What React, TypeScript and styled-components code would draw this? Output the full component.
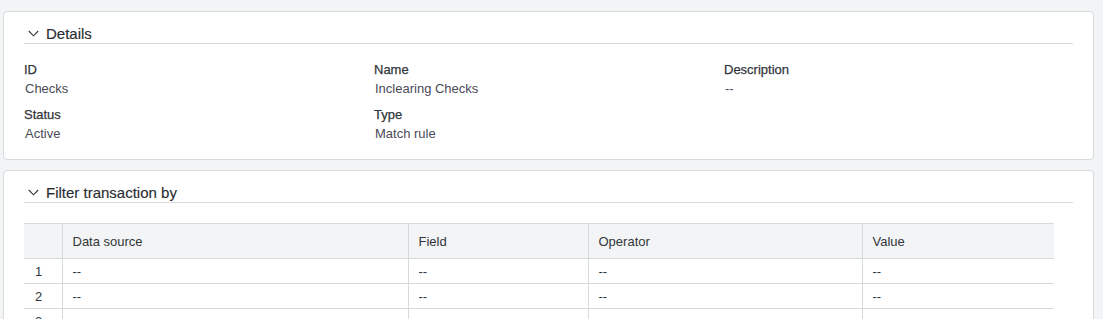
import React from "react";
import styled, { createGlobalStyle } from "styled-components";

const GlobalStyle = createGlobalStyle`
  html, body {
    margin: 0;
    padding: 0;
    background: #f2f4f5;
    overflow: hidden;
  }
  body {
    font-family: "Liberation Sans", Arial, sans-serif;
    font-size: 13px;
    color: #32363a;
  }
`;

const Page = styled.div`
  display: flex;
  flex-direction: column;
  gap: 10px;
  padding: 11px 9px 0 3px;
`;

const Card = styled.section`
  background: #fff;
  border: 1px solid #d5dadd;
  border-radius: 4px;
  padding: 11px 20px 16px 20px;
`;

const Header = styled.div`
  display: flex;
  align-items: center;
  gap: 7px;
  height: 20px;
  border-bottom: 1px solid #d5dadd;
  padding-left: 4px;
  font-size: 15px;
  color: #2a2d31;
  -webkit-text-stroke: 0.15px #2a2d31;
`;

const FieldGrid = styled.div`
  display: grid;
  grid-template-columns: 350px 350px 1fr;
  row-gap: 7px;
  margin-top: 16px;
`;

const Field = styled.div`
  display: flex;
  flex-direction: column;
`;

const Label = styled.span`
  line-height: 19px;
  color: #32363a;
  -webkit-text-stroke: 0.25px #32363a;
`;

const Value = styled.span`
  line-height: 19px;
  color: #4a4a57;
  padding-left: 1px;
`;

const Table = styled.table`
  border-collapse: collapse;
  width: 1030px;
  margin-top: 20px;
  table-layout: fixed;
`;

const Th = styled.th<{ $w?: number }>`
  box-sizing: border-box;
  width: ${(p) => (p.$w ? `${p.$w}px` : "auto")};
  height: 35px;
  background: #f2f4f5;
  border-top: 1px solid #d5dadd;
  border-bottom: 1px solid #d5dadd;
  border-left: 1px solid #d5dadd;
  text-align: left;
  font-weight: normal;
  color: #32363a;
  padding: 0 10px;
  &:first-child {
    border-left: none;
  }
`;

const Td = styled.td<{ $index?: boolean }>`
  box-sizing: border-box;
  height: 25px;
  border-bottom: 1px solid #d5dadd;
  border-left: 1px solid #d5dadd;
  padding: 0 ${(p) => (p.$index ? "11px" : "10px")};
  color: #32363a;
  &:first-child {
    border-left: none;
  }
`;

const Chevron = () => (
  <svg width="11" height="7" viewBox="0 0 11 7" fill="none">
    <path d="M0.8 1 L5.5 5.8 L10.2 1" stroke="#32363a" strokeWidth="1.1" />
  </svg>
);

const details = [
  { label: "ID", value: "Checks" },
  { label: "Name", value: "Inclearing Checks" },
  { label: "Description", value: "--" },
  { label: "Status", value: "Active" },
  { label: "Type", value: "Match rule" },
];

const columns = [
  { name: "", w: 38 },
  { name: "Data source", w: 346 },
  { name: "Field", w: 180 },
  { name: "Operator", w: 274 },
  { name: "Value", w: 192 },
];

const App = () => {
  return (
    <Page>
      <GlobalStyle />
      <Card>
        <Header>
          <Chevron />
          Details
        </Header>
        <FieldGrid>
          {details.map((d) => (
            <Field key={d.label}>
              <Label>{d.label}</Label>
              <Value>{d.value}</Value>
            </Field>
          ))}
        </FieldGrid>
      </Card>
      <Card>
        <Header>
          <Chevron />
          Filter transaction by
        </Header>
        <Table>
          <thead>
            <tr>
              {columns.map((c) => (
                <Th key={c.name} $w={c.w}>
                  {c.name}
                </Th>
              ))}
            </tr>
          </thead>
          <tbody>
            {[1, 2, 3].map((n) => (
              <tr key={n}>
                <Td $index>{n}</Td>
                <Td>--</Td>
                <Td>--</Td>
                <Td>--</Td>
                <Td>--</Td>
              </tr>
            ))}
          </tbody>
        </Table>
      </Card>
    </Page>
  );
};

export default App;
